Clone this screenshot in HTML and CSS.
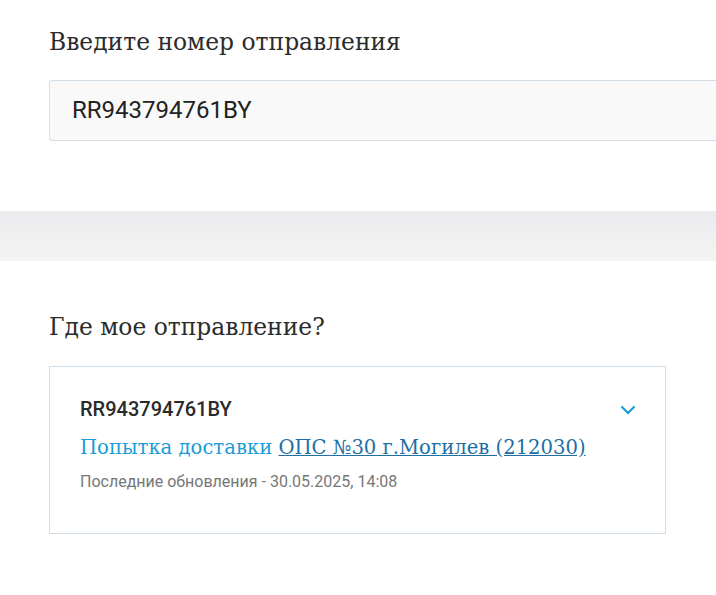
FILE: index.html
```html
<!DOCTYPE html>
<html lang="ru">
<head>
<meta charset="utf-8">
<link rel="stylesheet" href="styles.css">
</head>
<body>
<section class="search">
  <h2 class="heading">Введите номер отправления</h2>
  <div class="field">RR943794761BY</div>
</section>
<div class="band"></div>
<section class="result">
  <h2 class="heading">Где мое отправление?</h2>
  <div class="card">
    <div class="card-head">
      <div class="code">RR943794761BY</div>
      <svg class="chevron" width="16" height="10" viewBox="0 0 16 10"><path d="M1.5 1.5 L8 8 L14.5 1.5" fill="none" stroke="#1a9cd8" stroke-width="2.2"/></svg>
    </div>
    <div class="status">Попытка доставки <a href="#" class="office">ОПС №30 г.Могилев (212030)</a></div>
    <div class="updated">Последние обновления - 30.05.2025, 14:08</div>
  </div>
</section>
</body>
</html>
```
FILE: styles.css
```css
html, body { margin: 0; padding: 0; background: #fff; }
body { width: 716px; overflow: hidden; font-family: Roboto, "Noto Sans", sans-serif; }
.heading {
  margin: 0;
  font-family: "DejaVu Serif", serif;
  font-weight: normal;
  font-size: 23.4px;
  line-height: 28px;
  color: #2b2b2b;
}
.search { padding: 28px 0 0 49px; }
.field {
  margin-top: 24px;
  height: 59px;
  border: 1px solid #d3dfe9;
  border-right: none;
  border-radius: 3px 0 0 3px;
  background: #f9f9f9;
  padding-left: 22px;
  font-size: 24px;
  line-height: 59px;
  color: #222;
}
.band {
  margin-top: 70px;
  height: 50px;
  background: linear-gradient(#eaebed, #f4f4f4);
}
.result { padding: 52px 0 0 49px; }
.card {
  margin-top: 25px;
  width: 615px;
  height: 166px;
  border: 1px solid #cfdde9;
}
.card-head {
  display: flex;
  justify-content: space-between;
  align-items: center;
  padding: 30px 29px 0 30px;
}
.code { font-weight: 500; font-size: 20px; line-height: 24px; color: #2a2a2a; }
.chevron { margin-top: 2px; }
.status {
  padding: 13px 0 0 30px;
  font-family: "DejaVu Serif", serif;
  font-size: 19.6px;
  line-height: 28px;
  color: #1a9cd8;
}
.office { color: #1d6fa5; text-decoration: underline; }
.updated {
  padding: 10px 0 0 30px;
  font-size: 16px;
  line-height: 20px;
  color: #777;
}
```
